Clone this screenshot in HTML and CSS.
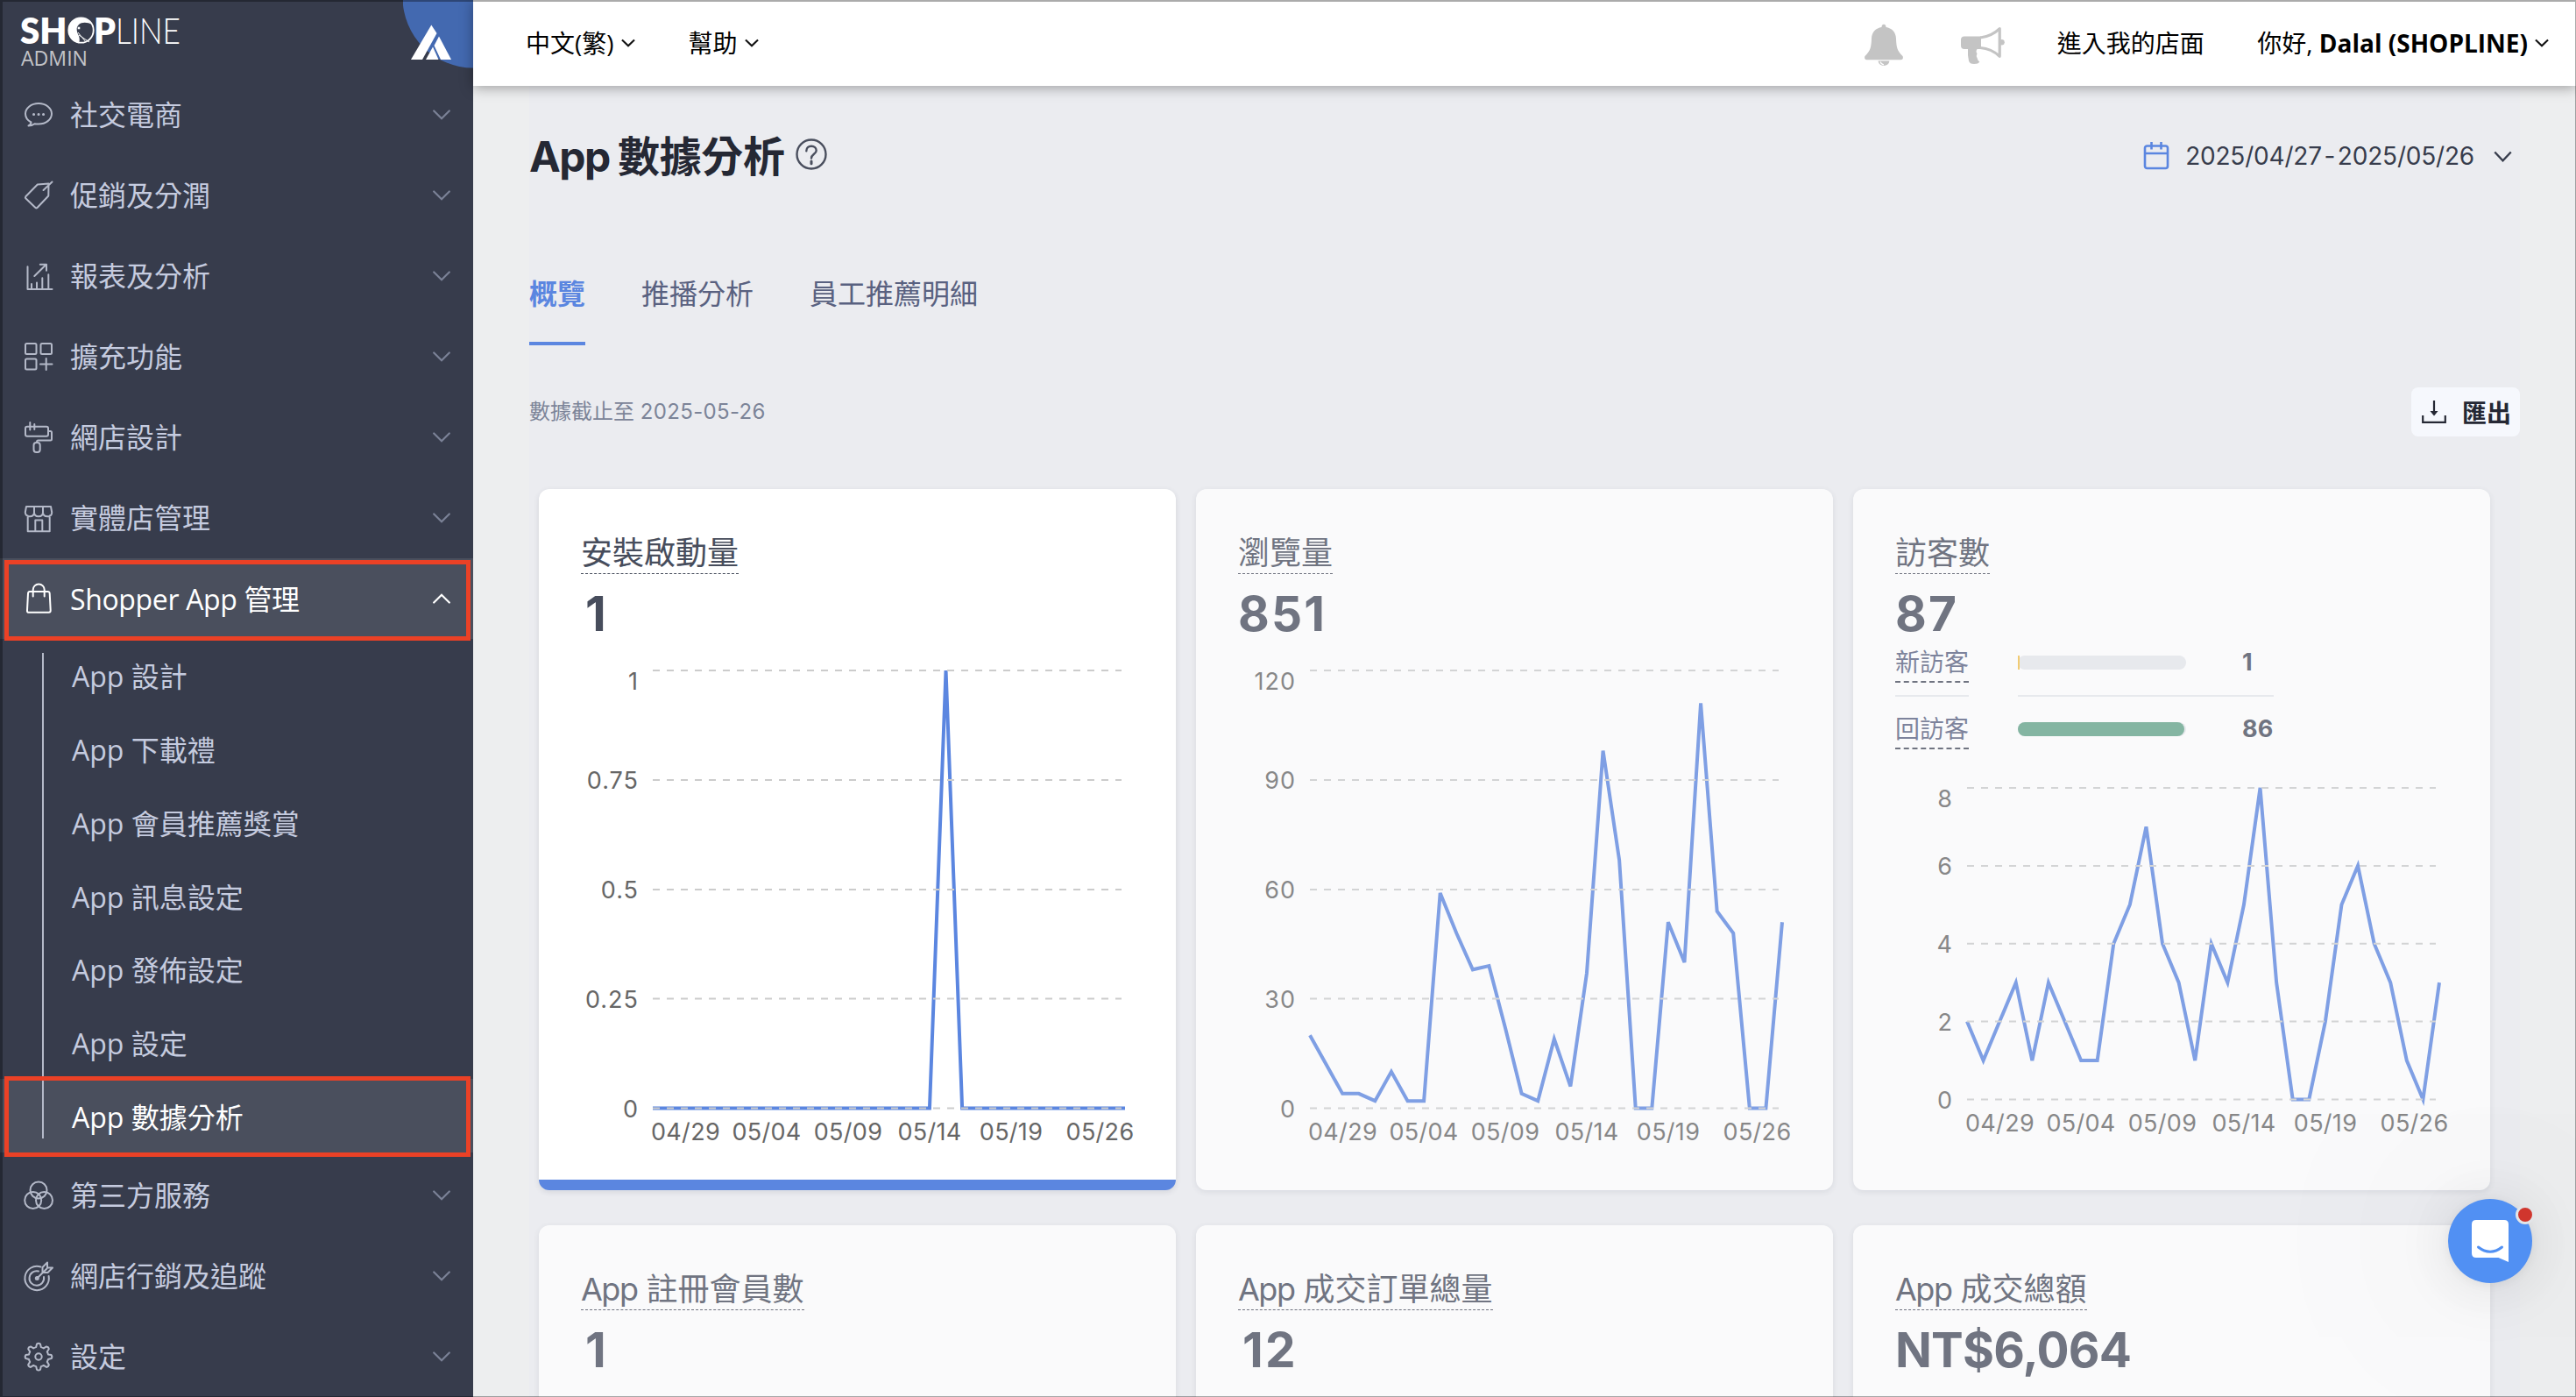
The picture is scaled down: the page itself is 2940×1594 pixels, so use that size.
FILE: index.html
```html
<!DOCTYPE html>
<html lang="zh-Hant">
<head>
<meta charset="utf-8">
<title>App 數據分析</title>
<link rel="stylesheet" href="styles.css">
</head>
<body>
<svg width="0" height="0" class="defs">
  <symbol id="chev" viewBox="0 0 20 12"><path d="M1.2 1.5 10 10.2 18.8 1.5"/></symbol>
  <symbol id="chev-up" viewBox="0 0 20 12"><path d="M1.2 10.5 10 1.8 18.8 10.5"/></symbol>
</svg>
<div class="app">
  <aside class="sidebar">
    <div class="brand">
      <svg class="logo" width="190" height="64" viewBox="0 0 190 64">
        <text class="logo-bold" x="-1" y="34.500" textLength="53.500" lengthAdjust="spacingAndGlyphs">SH</text>
        <text class="logo-bold" x="83" y="34.500" textLength="25" lengthAdjust="spacingAndGlyphs">P</text>
        <text class="logo-thin" x="108" y="34.500" textLength="74" lengthAdjust="spacingAndGlyphs">LINE</text>
        <circle cx="68.5" cy="19.5" r="14.2" fill="none" stroke="#fff" stroke-width="1.8"/>
        <path d="M54 20a14.5 14.5 0 0 1 27-7c-5-3-12-3-15 0-4 4-2 9 0 13 1 3 1 6 0 8-7-1-12-7-12-14z" fill="#fff"/>
        <path d="M66 25l12 8M65 22l9 11" stroke="#fff" stroke-width="1"/><circle cx="66" cy="17" r="1.8" fill="#fff" stroke="#373c4c" stroke-width=".6"/>
        <text class="logo-sub" x="0" y="60" textLength="76" lengthAdjust="spacingAndGlyphs">ADMIN</text>
      </svg>
      <svg class="mark" width="80" height="80" viewBox="0 0 80 80">
        <circle cx="80" cy="-3" r="80.5" fill="#4369b0"/>
        <path d="M32.3 28.5 38.5 38 22 68H9z" fill="#fff"/>
        <path d="M41 41.5 55 68H43L35.500 52z" fill="#fff"/>
        <path d="M34 53.5 40.500 68H26z" fill="#fff"/>
      </svg>
    </div>
    <nav class="menu">
      <a class="item"><svg class="ico" viewBox="0 0 32 32"><path d="M4.500 28.500c2-1 3-2.200 3-4C3.500 22.500 1 18.700 1 14.800 1 8.200 7.700 3 16 3s15 5.200 15 11.800S24.300 26.500 16 26.500c-1.600 0-3 0-4.500-.3-2 1.500-4.300 2.300-7 2.300z"/><path d="M10.500 15.500h.1M16 15.500h.1M21.500 15.500h.1" stroke-width="3"/></svg><span>社交電商</span><svg class="chev"><use href="#chev"/></svg></a>
      <a class="item"><svg class="ico" viewBox="0 0 32 32"><path d="M14.800 3.500 27.500 2.600 27.300 16.500 14.500 30q-1 .8-2 0L1.300 19.300q-.8-1 0-2zM21.500 10 31.500.5"/></svg><span>促銷及分潤</span><svg class="chev"><use href="#chev"/></svg></a>
      <a class="item"><svg class="ico" viewBox="0 0 32 32"><path d="M3.500 5.300V31h28M8 31v-6M14 31v-7.500M20.300 31V18.300M27.300 31V14.300M11.300 16 24.500 3M17.800 2.800h7.200v7"/></svg><span>報表及分析</span><svg class="chev"><use href="#chev"/></svg></a>
      <a class="item"><svg class="ico" viewBox="0 0 32 32"><rect x="1" y="1" width="12.500" height="12" rx="1.500"/><rect x="18.500" y="1" width="12.500" height="12" rx="1.500"/><rect x="1" y="18.500" width="12.500" height="12" rx="1.500"/><path d="M24.700 18v13M18 24.400h13.500"/></svg><span>擴充功能</span><svg class="chev"><use href="#chev"/></svg></a>
      <a class="item"><svg class="ico" viewBox="0 0 32 32"><rect x="1" y="3.700" width="26" height="11" rx="2"/><path d="M6.300-1v8.500M11.300 1v6M27 9h2.500q1.500 0 1.500 1.500V18q0 1.500-1.500 1.500H15.500q-1.500 0-1.500 2"/><rect x="10.500" y="22" width="7.200" height="11" rx="3"/></svg><span>網店設計</span><svg class="chev"><use href="#chev"/></svg></a>
      <a class="item"><svg class="ico" viewBox="0 0 32 32"><path d="M2 3h28l1.200 6.500c0 3-2 4.800-5 4.800-3.200 0-5.200-1.800-5.200-4.800 0 3-2 4.800-5 4.800s-5-1.800-5-4.800c0 3-2 4.800-5 4.800S.8 12.500.8 9.500zM11 3v6.500M21 3v6.500M3.700 13.500V31.300h25V13.500M12.300 31V18.500h8V31"/></svg><span>實體店管理</span><svg class="chev"><use href="#chev"/></svg></a>
      <a class="item open"><svg class="ico" viewBox="0 0 32 32"><path d="M6 8h20.500q2 0 2.200 2l1 19.500q0 2.300-2 2.300H5q-2.200 0-2-2.300L4 10q.2-2 2-2zM9.700 13.500V6a6.500 6.500 0 0 1 13 0v7.500"/></svg><span>Shopper App 管理</span><svg class="chev"><use href="#chev-up"/></svg></a>
      <div class="sub">
        <a>App 設計</a>
        <a>App 下載禮</a>
        <a>App 會員推薦獎賞</a>
        <a>App 訊息設定</a>
        <a>App 發佈設定</a>
        <a>App 設定</a>
        <a class="current">App 數據分析</a>
      </div>
      <a class="item"><svg class="ico" viewBox="0 0 32 32"><circle cx="16" cy="10" r="9.500"/><circle cx="9.700" cy="21.500" r="9.500"/><circle cx="22.500" cy="21.500" r="9.500"/></svg><span>第三方服務</span><svg class="chev"><use href="#chev"/></svg></a>
      <a class="item"><svg class="ico" viewBox="0 0 32 32"><path d="M18.500 5.500A13.700 13.700 0 1 0 27.600 16M16 10.500A8.300 8.300 0 1 0 22 17"/><circle cx="14.300" cy="18.500" r="1.500"/><path d="M14.300 18.500 25.500 7.500M20.500 11.500V6l5.500-5.500V6.500H32L26.500 12h-6"/></svg><span>網店行銷及追蹤</span><svg class="chev"><use href="#chev"/></svg></a>
      <a class="item"><svg class="ico" viewBox="0 0 32 32"><path d="M14 1.500q2-1.500 4 0l.8 3.600q1.800.6 3 1.300l3.200-2q2.500.3 2.800 2.800l-2 3.200q.8 1.400 1.200 3l3.600.7q1.500 2 0 4l-3.600.8q-.5 1.700-1.200 3l2 3.200q-.3 2.500-2.800 2.800l-3.200-2q-1.400.8-3 1.200l-.8 3.600q-2 1.500-4 0l-.8-3.600q-1.600-.4-3-1.200l-3.200 2Q4.500 27.600 4.200 25.100l2-3.200q-.8-1.300-1.200-3L1.400 18.100q-1.500-2 0-4L5 13.400q.4-1.600 1.200-3l-2-3.200Q4.500 4.700 7 4.400l3.200 2q1.200-.7 3-1.300z"/><circle cx="16" cy="16" r="3.700"/></svg><span>設定</span><svg class="chev"><use href="#chev"/></svg></a>
    </nav>
    <div class="mark-box mark-parent"></div>
    <div class="mark-box mark-child"></div>
  </aside>

  <main class="main">
    <header class="topbar">
      <div class="drop">中文(繁)<svg class="mini"><use href="#chev"/></svg></div>
      <div class="drop">幫助<svg class="mini"><use href="#chev"/></svg></div>
      <svg class="bell" width="44" height="50" viewBox="0 0 44 50"><path d="M22 .7c1.700 0 2.500 1.300 2.500 3.300C31 5 35.700 9.500 36 17c.3 9 1 14 7.500 20 1 2 .2 4.300-2 4.300H2.500C.3 41.300-.5 39 .5 37 7 31 7.700 26 8 17 8.300 9.500 13 5 19.500 4c0-2 .8-3.300 2.500-3.300z"/><path d="M15.500 42.500a6.600 6.600 0 0 0 13 0z"/><path d="M18 43.500q1 3 4 3.300" fill="none" stroke="#fff" stroke-width="1.200"/></svg>
      <svg class="mega" width="50" height="46" viewBox="0 0 50 46"><path d="M4 11.500h19V26h-4.500q-2 3 0 5-1.500 3 0 5 .5 3 2.800 4.500Q20 43 15 43q-5 0-6-3.500Q7.500 33 8 26H4q-4 0-4-4v-6.500q0-4 4-4z"/><path d="M22 13Q35 11.500 44.200 2.600V34.300Q35 25.500 22 24.500" fill="none" stroke="#c4c4c4" stroke-width="3.200" stroke-linejoin="round"/><circle cx="46.500" cy="18.300" r="3.300"/></svg>
      <a class="store">進入我的店面</a>
      <div class="drop user"><span>你好, <b>Dalal (SHOPLINE)</b></span><svg class="mini"><use href="#chev"/></svg></div>
    </header>

    <section class="page">
      <div class="title-row">
        <h1><span>App</span> 數據分析</h1>
        <svg class="help" width="36" height="36" viewBox="0 0 36 36"><circle cx="18" cy="18" r="16.500"/><path d="M12.300 14.200c0-3.500 2.400-5.500 5.700-5.500s5.700 2 5.700 5c0 4-5.700 4.300-5.700 8.800"/><path d="M18 26v2.800" stroke-width="3"/></svg>
        <div class="range">
          <svg width="30" height="32" viewBox="0 0 30 32"><rect x="2" y="4.500" width="26" height="25.500" rx="2.500"/><path d="M2 13h26M9.500 0v8.500M20.500 0v8.500"/></svg>
          <span>2025/04/27 - 2025/05/26</span>
          <svg class="range-chev" width="21" height="13" viewBox="0 0 20 12"><path d="M1.200 1.200 10 10.500 18.800 1.200"/></svg>
        </div>
      </div>
      <div class="tabs"><a class="on">概覽</a><a>推播分析</a><a>員工推薦明細</a></div>
      <div class="note-row">
        <span class="note">數據截止至 <span>2025-05-26</span></span>
        <button class="export"><svg width="28" height="28" viewBox="0 0 28 28"><path d="M1.200 18v7.800h25.600V18M14 1v16"/><path d="M9.500 13h9L14 18.500z" class="tip"/></svg>匯出</button>
      </div>

      <div class="grid">
        <article class="card active">
          <h2>安裝啟動量</h2>
          <p class="num indent">1</p>
          <svg class="chart" width="631" height="612">
            <polyline class="line" transform="translate(82 530.500) scale(18.586 -499.500)" points="0,0 17,0 18,1 19,0 29,0"/>
            <path class="rule" d="M82 31h535M82 156h535M82 281h535M82 405.500h535M82 530.500h535"/>
            <g class="ylab"><text x="66" y="52.500">1</text><text x="66" y="165.800">0.75</text><text x="66" y="290.800">0.5</text><text x="66" y="415.800">0.25</text><text x="66" y="540.800">0</text></g>
            <g class="xlab"><text x="119.500" y="567">04/29</text><text x="212" y="567">05/04</text><text x="305" y="567">05/09</text><text x="398" y="567">05/14</text><text x="491" y="567">05/19</text><text x="592.500" y="567">05/26</text></g>
          </svg>
        </article>

        <article class="card">
          <h2>瀏覽量</h2>
          <p class="num">851</p>
          <svg class="chart" width="631" height="612">
            <polyline class="line" transform="translate(82 530.500) scale(18.586 -4.1625)" points="0,20 1,12 2,4 3,4 4,2 5,10 6,2 7,2 8,59 9,48 10,38 11,39 12,22 13,4 14,2 15,19 16,6 17,37 18,98 19,68 20,0 21,0 22,51 23,40 24,111 25,54 26,48 27,0 28,0 29,51"/>
            <path class="rule" d="M82 31h535M82 156h535M82 281h535M82 405.500h535M82 530.500h535"/>
            <g class="ylab"><text x="66" y="52.500">120</text><text x="66" y="165.800">90</text><text x="66" y="290.800">60</text><text x="66" y="415.800">30</text><text x="66" y="540.800">0</text></g>
            <g class="xlab"><text x="119.500" y="567">04/29</text><text x="212" y="567">05/04</text><text x="305" y="567">05/09</text><text x="398" y="567">05/14</text><text x="491" y="567">05/19</text><text x="592.500" y="567">05/26</text></g>
          </svg>
        </article>

        <article class="card">
          <h2>訪客數</h2>
          <p class="num">87</p>
          <div class="split">
            <div class="names"><span class="row"><em>新訪客</em></span><span class="row"><em>回訪客</em></span></div>
            <div class="bars">
              <div class="row"><i class="track"><i class="fill new" style="width:1.150%"></i></i><b>1</b></div>
              <div class="row"><i class="track"><i class="fill back" style="width:98.850%"></i></i><b>86</b></div>
            </div>
          </div>
          <svg class="chart" width="631" height="478">
            <polyline class="line" transform="translate(82 386.500) scale(18.586 -44.450)" points="0,2 1,1 2,2 3,3 4,1 5,3 6,2 7,1 8,1 9,4 10,5 11,7 12,4 13,3 14,1 15,4 16,3 17,5 18,8 19,3 20,0 21,0 22,2 23,5 24,6 25,4 26,3 27,1 28,0 29,3"/>
            <path class="rule" d="M82 31h535M82 120h535M82 208.700h535M82 297.600h535M82 386.500h535"/>
            <g class="ylab"><text x="66" y="52.500">8</text><text x="66" y="130">6</text><text x="66" y="219">4</text><text x="66" y="308">2</text><text x="66" y="397">0</text></g>
            <g class="xlab"><text x="119.500" y="423">04/29</text><text x="212" y="423">05/04</text><text x="305" y="423">05/09</text><text x="398" y="423">05/14</text><text x="491" y="423">05/19</text><text x="592.500" y="423">05/26</text></g>
          </svg>
        </article>

        <article class="card"><h2><span>App</span> 註冊會員數</h2><p class="num indent">1</p></article>
        <article class="card"><h2><span>App</span> 成交訂單總量</h2><p class="num indent">12</p></article>
        <article class="card"><h2><span>App</span> 成交總額</h2><p class="num money">NT$6,064</p></article>
      </div>
    </section>
  </main>
</div>
<div class="chat">
  <svg width="42" height="48" viewBox="0 0 42 48"><path d="M5 0h32q5 0 5 5v43L30.500 43H5q-5 0-5-5V5q0-5 5-5z" fill="#fff"/><path d="M7.500 31q13.500 10.500 27 0" fill="none" stroke="#5190f3" stroke-width="3" stroke-linecap="round"/></svg>
  <span class="dot"></span>
</div>
<div class="edge"></div>
</body>
</html>
```
FILE: styles.css
```css
* { box-sizing: border-box; }
body {
  margin: 0;
  width: 2940px;
  height: 1594px;
  overflow: hidden;
  font-family: Inter, "Noto Sans CJK TC", sans-serif;
  background: #edeeef;
}
h1, h2, p { margin: 0; }
.defs { position: absolute; }

.app { display: flex; height: 1594px; overflow: hidden; }

/* Sidebar */
.sidebar {
  position: relative;
  flex: 0 0 540px;
  background: #373c4c;
  font-family: "Open Sans", "Noto Sans CJK TC", sans-serif;
}
.brand { display: flex; justify-content: space-between; height: 85px; }
.logo { margin: 15px 0 0 24px; overflow: visible; }
.logo text { fill: #fff; font-family: Lato, sans-serif; font-size: 41px; }
.logo text.logo-bold { font-weight: 800; }
.logo text.logo-thin { font-weight: 300; }
.logo text.logo-sub { font-size: 24px; font-weight: 400; font-family: "Open Sans", sans-serif; fill: #c3c4c8; }
.menu { display: flex; flex-direction: column; }
.item {
  display: flex;
  align-items: center;
  height: 92px;
  padding: 0 26px 0 28px;
  color: #c5cbdf;
  font-size: 32px;
  line-height: 44px;
}
.item span { flex: 1; margin-left: 20px; }
.ico {
  width: 32px;
  height: 32px;
  overflow: visible;
  fill: none;
  stroke: #b4b9c8;
  stroke-width: 2;
  stroke-linecap: round;
  stroke-linejoin: round;
}
.chev { width: 20px; height: 12px; fill: none; stroke: #7b8297; stroke-width: 2.200; stroke-linecap: round; }
.open { background: #4a4f5d; color: #fff; }
.open span { padding-top: 2px; letter-spacing: -.350px; }
.open .ico, .open .chev { stroke: #fff; }
.sub {
  display: flex;
  flex-direction: column;
  height: 589px;
  padding-bottom: 3px;
  background: linear-gradient(#b4b9c8, #b4b9c8) 48px 16px / 2px 554px no-repeat;
}
.sub a {
  flex: 1;
  display: flex;
  align-items: center;
  padding: 3px 0 0 82px;
  color: #c5cbdf;
  font-size: 32px;
  line-height: 44px;
}
.sub .current {
  color: #fff;
  background: linear-gradient(#b4b9c8, #b4b9c8) 48px 0 / 2px 68px no-repeat, #4a4f5d;
}
.mark-box { position: absolute; left: 5px; width: 532px; border: 5px solid #eb4126; }
.mark-parent { top: 639px; height: 92px; }
.mark-child { top: 1228px; height: 92px; }

/* Top bar */
.main { flex: 1; min-width: 0; }
.topbar {
  position: relative;
  display: flex;
  align-items: center;
  height: 98px;
  padding: 0 31px 0 60px;
  background: #fff;
  color: #000;
  font-family: "Open Sans", "Noto Sans CJK TC", sans-serif;
  font-size: 28px;
  line-height: 40px;
  box-shadow: 0 2px 14px rgba(0, 0, 0, .35);
}
.drop { display: flex; align-items: center; gap: 8px; margin-right: 61px; white-space: nowrap; }
.drop.user { margin: 0 0 0 60.500px; }
.mini { width: 16px; height: 10px; fill: none; stroke: #111; stroke-width: 2.600; }
.bell { margin-left: auto; margin-right: 66px; margin-top: 6px; fill: #c4c4c4; }
.mega { margin-right: 60px; margin-top: 8px; fill: #c4c4c4; overflow: visible; }

/* Page */
.page { margin: 0 64px; background: #ebecf0; }
.title-row { display: flex; align-items: center; height: 160px; padding-right: 9px; }
h1 { padding-top: 2px; font-size: 48px; line-height: 64px; font-weight: 700; color: #252834; letter-spacing: -.300px; word-spacing: -2px; }
h1 span { letter-spacing: -1.500px; }
.help { margin-left: 12px; margin-top: -5px; fill: none; stroke: #4a4f5e; stroke-width: 2.400; stroke-linecap: round; }
.range { display: flex; align-items: center; margin-left: auto; color: #373c4c; font-size: 28px; line-height: 40px; }
.range svg { fill: none; stroke: #5b86e0; stroke-width: 2.600; }
.range span { margin: 0 22px 0 18px; letter-spacing: -.200px; word-spacing: -5px; }
.range .range-chev { stroke: #373c4c; stroke-width: 2.200; }
.tabs { display: flex; align-items: flex-end; gap: 64px; height: 136px; color: #596180; font-size: 32px; line-height: 115px; }
.tabs a { height: 116px; border-bottom: 4px solid transparent; }
.tabs .on { color: #5b86e0; border-color: #5b86e0; font-weight: 700; }
.note-row { display: flex; align-items: center; justify-content: space-between; height: 164px; padding: 48px 0 60px; }
.note { margin-top: -5px; color: #7c8498; font-size: 24px; }
.note span { letter-spacing: .350px; }
.export {
  display: flex;
  align-items: center;
  width: 124px;
  height: 56px;
  padding: 0 0 1px 12px;
  gap: 18px;
  border: 0;
  border-radius: 8px;
  background: #f6f8fd;
  color: #252834;
  font: 600 28px/40px "Noto Sans CJK TC", sans-serif;
  white-space: nowrap;
}
.export svg { fill: none; stroke: #252834; stroke-width: 2.200; }
.export .tip { fill: #252834; stroke: none; }

/* Cards */
.grid { display: grid; grid-template-columns: repeat(3, 727px); grid-auto-rows: 800px; gap: 40px 23px; padding-left: 11px; }
.card {
  padding: 46px 48px 0;
  border-radius: 12px;
  background: #fff;
  box-shadow: 0 2px 6px rgba(40, 48, 70, .12);
  opacity: .750;
  overflow: hidden;
}
.card.active { opacity: 1; border-bottom: 12px solid #5b86e0; }
h2 {
  width: fit-content;
  height: 51px;
  border-bottom: 1px dashed #474d5c;
  color: #474d5c;
  font-size: 36px;
  line-height: 54px;
  font-weight: 400;
}
h2 span { letter-spacing: -1.500px; }
.num { height: 79px; color: #474d5c; font-size: 55px; line-height: 90px; font-weight: 700; letter-spacing: 2.200px; }
.indent { padding-left: 5px; }
.money { letter-spacing: -.800px; }
.chart { display: block; overflow: visible; }
.line { fill: none; stroke: #5b86e0; stroke-width: 4; vector-effect: non-scaling-stroke; }
.rule { fill: none; stroke: #ccc; stroke-width: 2; stroke-dasharray: 8 8; }
.chart text { fill: #666; font-size: 27px; letter-spacing: .300px; }
.chart .ylab text { letter-spacing: 1px; text-anchor: end; }
.xlab { text-anchor: middle; }

.split { display: flex; gap: 56px; height: 134px; }
.names { width: 84px; }
.bars { width: 292px; }
.split .row { display: flex; align-items: center; height: 74px; }
.split .row:first-child { height: 61px; padding-bottom: 15px; border-bottom: 2px solid #e6e8ec; }
.names em {
  flex: none;
  height: 45px;
  border-bottom: 2px dashed #474d5c;
  color: #596180;
  font-style: normal;
  font-size: 28px;
  line-height: 44px;
}
.bars b { flex: none; width: 36px; margin-left: 64px; color: #474d5c; font-size: 27px; line-height: 40px; letter-spacing: .300px; }
.track { flex: none; display: block; width: 192px; height: 16px; border-radius: 8px; background: #e6e8ec; }
.fill { display: block; height: 16px; border-radius: 8px; }
.new { background: #f4c04a; border-radius: 0; }
.back { background: #62a389; }

/* Floating chat launcher */
.chat {
  position: absolute;
  left: 2794px;
  top: 1368px;
  width: 96px;
  height: 96px;
  display: flex;
  align-items: center;
  justify-content: center;
  border-radius: 50%;
  background: #5190f3;
  box-shadow: 0 2px 12px rgba(0, 0, 0, .06), 0 4px 64px rgba(0, 0, 0, .1), 0 0 260px 20px rgba(0, 0, 0, .1);
}
.dot {
  position: absolute;
  left: 77px;
  top: 7px;
  width: 22px;
  height: 22px;
  border: 3px solid #e3e5e8;
  border-radius: 50%;
  background: #d0362d;
}
.edge {
  position: absolute;
  left: 0;
  top: 0;
  width: 2940px;
  height: 1594px;
  border: solid rgba(0, 0, 0, .33);
  border-width: 2px 1px 1px 3px;
  pointer-events: none;
}
```
